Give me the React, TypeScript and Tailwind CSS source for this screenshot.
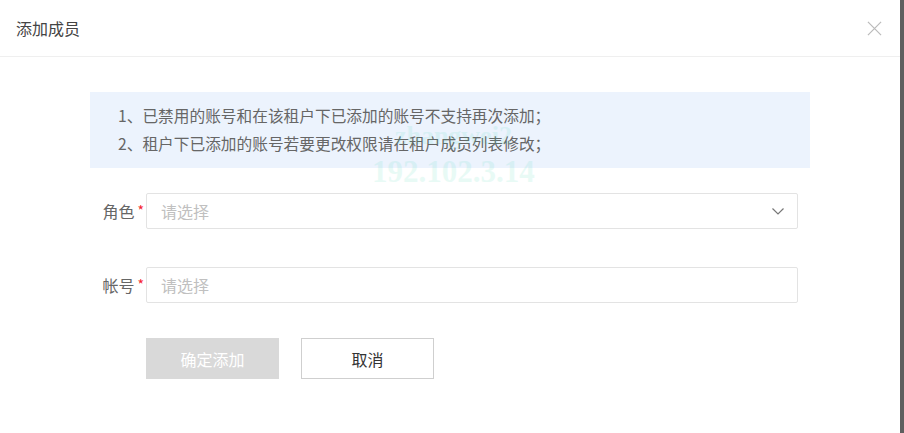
import React from "react";

const font = { fontFamily: '"Microsoft YaHei", "Noto Sans CJK SC", sans-serif' };

const Field = ({ label, chevron }: { label: string; chevron?: boolean }) => (
  <div className="flex items-center">
    <div className="flex w-[146px] shrink-0 items-center justify-end pr-[2px] text-[16px] text-[#666]">
      <span>{label}</span>
      <span className="ml-[3px] mt-[-2px] text-[14px] text-[#f5222d]">*</span>
    </div>
    <div className="flex h-[36px] w-[652px] items-center justify-between rounded-[2px] border border-[#e3e3e3] bg-white pl-[14px] pr-[12px]">
      <span className="text-[16px] text-[#c0c0c0]">请选择</span>
      {chevron && (
        <svg width="14" height="14" viewBox="0 0 14 14" fill="none" stroke="#777" strokeWidth="1.2">
          <path d="M1.5 4.5 L7 10 L12.5 4.5" />
        </svg>
      )}
    </div>
  </div>
);

export default function App() {
  return (
    <div className="flex h-[433px] w-[904px] bg-white" style={font}>
      <div className="relative flex flex-1 flex-col">
        <div className="flex h-[57px] items-center justify-between border-b border-[#efefef] pl-[16px] pr-[18px]">
          <span className="text-[16px] text-[#444]">添加成员</span>
          <svg width="15" height="15" viewBox="0 0 16 16" stroke="#bbb" strokeWidth="1.3">
            <path d="M1 1 L15 15 M15 1 L1 15" />
          </svg>
        </div>
        <div className="pt-[35px]">
          <div className="ml-[90px] w-[720px] bg-[#ecf3fd] py-[10px] pl-[28px] text-[15.7px] leading-[28px] text-[#666]">
            <div>1、已禁用的账号和在该租户下已添加的账号不支持再次添加；</div>
            <div>2、租户下已添加的账号若要更改权限请在租户成员列表修改；</div>
          </div>
          <div className="mt-[25px] flex flex-col gap-[38px]">
            <Field label="角色" chevron />
            <Field label="帐号" />
          </div>
          <div className="mt-[35px] flex gap-[22px] pl-[146px]">
            <button className="h-[41px] w-[133px] bg-[#d9d9d9] text-[16px] text-white">确定添加</button>
            <button className="h-[41px] w-[133px] border border-[#cfcfcf] bg-white text-[16px] text-[#333]">取消</button>
          </div>
        </div>
        <div
          className="pointer-events-none absolute left-[372px] top-[118px] text-center font-bold leading-[36px] text-[#2ad1a8] opacity-[0.1]"
          style={{ fontFamily: '"Liberation Serif", serif' }}
        >
          <div className="text-[26px]">zhangwei2</div>
          <div className="text-[31px]">192.102.3.14</div>
        </div>
      </div>
      <div className="w-[4px] bg-[#5f5f5f]" />
    </div>
  );
}
